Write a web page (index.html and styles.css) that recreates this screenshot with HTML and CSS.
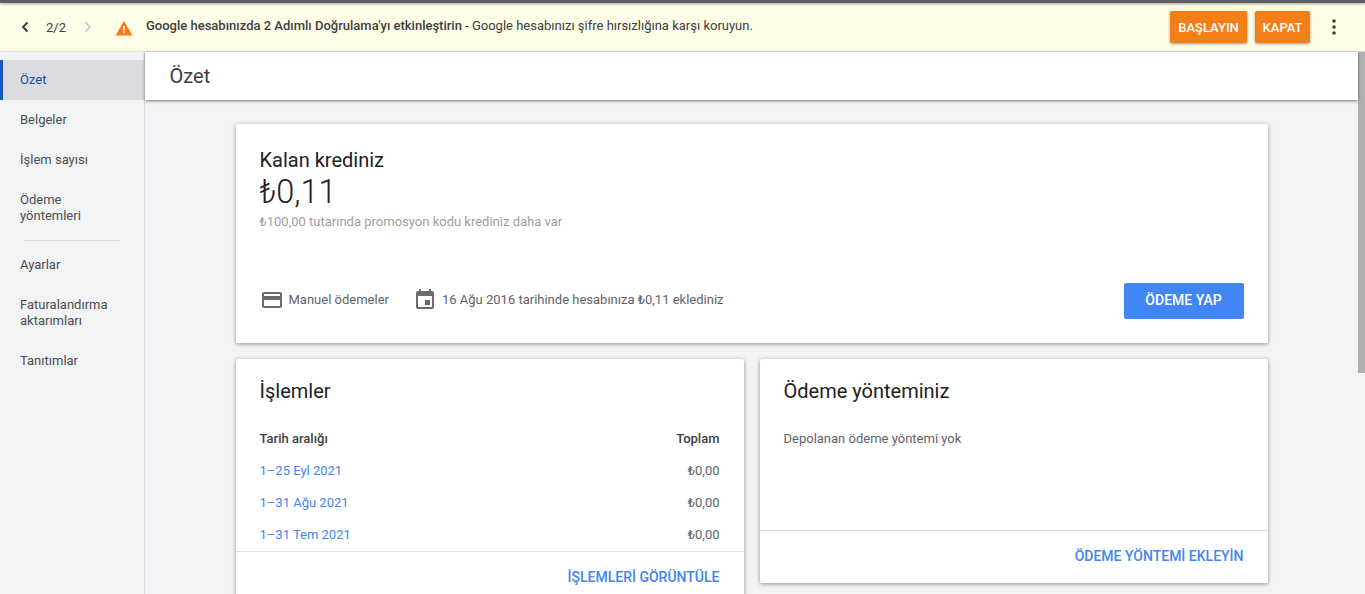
FILE: index.html
```html
<!DOCTYPE html>
<html lang="tr">
<head>
<meta charset="utf-8">
<title>Özet</title>
<link rel="stylesheet" href="styles.css">
</head>
<body>
<div class="topstrip"></div>
<div class="banner">
  <div class="pager">
    <svg class="chev" width="24" height="24" viewBox="0 0 24 24"><path d="M14.500 7.500L10 12l4.500 4.500" fill="none" stroke="#3c4043" stroke-width="2"/></svg>
    <span class="count">2/2</span>
    <svg class="chev" width="24" height="24" viewBox="0 0 24 24"><path d="M9.500 7.500L14 12l-4.500 4.500" fill="none" stroke="#c4c4c4" stroke-width="1.600"/></svg>
  </div>
  <svg class="warn" width="18" height="16" viewBox="0 0 18 16"><path d="M9 1L17.500 15.500H.5z" fill="#f57c17"/><rect x="8.200" y="6" width="1.600" height="4.500" fill="#fff"/><rect x="8.200" y="11.500" width="1.600" height="1.600" fill="#fff"/></svg>
  <p class="message"><b>Google hesabınızda 2 Adımlı Doğrulama'yı etkinleştirin</b> - Google hesabınızı şifre hırsızlığına karşı koruyun.</p>
  <button class="orange start">BAŞLAYIN</button>
  <button class="orange close">KAPAT</button>
  <svg class="more" width="4" height="16" viewBox="0 0 4 16"><circle cx="2" cy="2" r="1.800"/><circle cx="2" cy="8" r="1.800"/><circle cx="2" cy="14" r="1.800"/></svg>
</div>
<div class="app">
  <nav class="side">
    <a class="nav active">Özet</a>
    <a class="nav">Belgeler</a>
    <a class="nav">İşlem sayısı</a>
    <a class="nav two">Ödeme<br>yöntemleri</a>
    <div class="rule"></div>
    <a class="nav">Ayarlar</a>
    <a class="nav two">Faturalandırma<br>aktarımları</a>
    <a class="nav">Tanıtımlar</a>
  </nav>
  <main class="main">
    <header class="head"><h1>Özet</h1></header>
    <div class="content">
      <section class="card credit">
        <h2>Kalan krediniz</h2>
        <div class="amount"><span class="lira">₺</span>0,11</div>
        <div class="promo"><span class="lira">₺</span>100,00 tutarında promosyon kodu krediniz daha var</div>
        <div class="credit-foot">
          <svg class="ic" width="24" height="24" viewBox="0 0 24 24"><path fill="#6b6b6b" d="M20 4H4c-1.100 0-2 .9-2 2v12c0 1.100.9 2 2 2h16c1.100 0 2-.9 2-2V6c0-1.100-.9-2-2-2zm0 14H4v-6h16v6zm0-10H4V6h16v2z"/></svg>
          <span class="meta">Manuel ödemeler</span>
          <svg class="ic cal" width="24" height="24" viewBox="0 0 24 24"><path fill="#6b6b6b" d="M17 12h-5v5h5v-5zM16 1v2H8V1H6v2H5c-1.100 0-2 .9-2 2v14c0 1.100.9 2 2 2h14c1.100 0 2-.9 2-2V5c0-1.100-.9-2-2-2h-1V1h-2zm3 18H5V8h14v11z"/></svg>
          <span class="meta">16 Ağu 2016 tarihinde hesabınıza <span class="lira">₺</span>0,11 eklediniz</span>
          <button class="pay">ÖDEME YAP</button>
        </div>
      </section>
      <div class="cols">
        <section class="card tx">
          <h2 class="title">İşlemler</h2>
          <div class="row th"><span>Tarih aralığı</span><span>Toplam</span></div>
          <div class="row"><a>1–25 Eyl 2021</a><span><span class="lira">₺</span>0,00</span></div>
          <div class="row"><a>1–31 Ağu 2021</a><span><span class="lira">₺</span>0,00</span></div>
          <div class="row"><a>1–31 Tem 2021</a><span><span class="lira">₺</span>0,00</span></div>
          <div class="action tx-action"><a>İŞLEMLERİ GÖRÜNTÜLE</a></div>
        </section>
        <section class="card method">
          <h2 class="title">Ödeme yönteminiz</h2>
          <p class="none">Depolanan ödeme yöntemi yok</p>
          <div class="action"><a>ÖDEME YÖNTEMİ EKLEYİN</a></div>
        </section>
      </div>
    </div>
  </main>
  <div class="scrollbar"><div class="thumb"></div></div>
</div>
</body>
</html>
```
FILE: styles.css
```css
* { box-sizing: border-box; }
html, body { margin: 0; height: 594px; overflow: hidden; }
body { font-family: Roboto, "Liberation Sans", sans-serif; font-size: 13px; color: #3c4043; background: #f1f3f4; }
h1, h2, p { margin: 0; font-weight: 400; }
a { color: #4285f4; }
button { border: 0; font-family: inherit; cursor: pointer; }
.lira { font-family: "Liberation Sans", Roboto, sans-serif; line-height: 0; }

.topstrip { height: 3px; background: #5f6065; box-shadow: 0 1px 3px rgba(0,0,0,.35); position: relative; }
.banner { height: 49px; display: flex; align-items: center; background: #fffde7; border-bottom: 1px solid #e0e0e0; padding-left: 13px; }
.pager { display: flex; align-items: center; width: 103px; }
.count { width: 36px; margin-left: 9px; margin-right: -6px; font-size: 13px; color: #3c4043; }
.chev { flex: none; }
.warn { flex: none; margin: 1px 0 0 -1px; }
.message { flex: 1; margin-left: 13px; font-size: 13px; color: #3c4043; margin-top: -4px; }
.message b { font-weight: 500; }
.orange { height: 32px; background: #f57f17; color: #fff; font-size: 13px; font-weight: 500; border-radius: 2px; box-shadow: 0 1px 3px rgba(0,0,0,.4); padding: 0; }
.start { width: 77px; }
.close { width: 55px; margin-left: 8px; }
.more { fill: #3c4043; margin: 0 29px 0 22px; }

.app { display: flex; height: 542px; position: relative; }
.side { width: 145px; flex: none; background: #f1f3f4; border-right: 1px solid #dadce0; padding-top: 8px; }
.nav { display: flex; align-items: center; height: 40px; padding-left: 20px; color: #4a4d51; font-size: 13px; line-height: 16px; }
.nav.two { height: 56px; }
.nav.active { background: #dadce0; color: #174ea6; border-left: 3px solid #1a56c4; padding-left: 17px; }
.rule { height: 1px; background: #dadce0; margin: 4px 24px 4px; }

.main { flex: 1; min-width: 0; }
.head { height: 48px; background: #fff; box-shadow: 0 1px 3px rgba(0,0,0,.5); display: flex; align-items: center; padding-left: 24.500px; position: relative; }
.head h1 { font-size: 20px; color: #3c4043; }
.content { padding: 24px 90.500px 0 90.500px; }
.card { background: #fff; border-radius: 2px; box-shadow: 0 1px 4px rgba(0,0,0,.4); }

.credit { height: 219px; padding: 24px 24px 0; }
.credit h2 { font-size: 20px; line-height: 24px; color: #212121; }
.amount { font-size: 32.500px; line-height: 38px; color: #212121; font-weight: 300; margin-top: 1px; }
.promo { font-size: 13px; line-height: 16px; color: #9e9e9e; margin-top: 3px; }
.credit-foot { display: flex; align-items: center; margin-top: 53px; height: 36px; }
.ic { flex: none; margin-bottom: 2px; }
.meta { margin-left: 5px; margin-bottom: 4px; font-size: 13px; color: #5f6368; }
.cal { margin-left: 24px; }
.pay { margin-left: auto; width: 120px; height: 36px; background: #4285f4; color: #fff; font-size: 14px; font-weight: 500; border-radius: 2px; padding: 0 0 2px; }

.cols { display: flex; gap: 16px; margin-top: 16px; align-items: flex-start; }
.cols .card { width: 508px; }
.title { font-size: 20px; line-height: 24px; color: #212121; padding: 20px 24px 0; }
.tx { height: 260px; }
.method { height: 224px; }
.row { display: flex; justify-content: space-between; height: 32px; align-items: center; padding: 0 24px; font-size: 13px; color: #5f6368; }
.row.th { margin-top: 19px; color: #3c4043; font-weight: 500; }
.action { display: flex; justify-content: flex-end; align-items: center; height: 53px; border-top: 1px solid #e0e0e0; padding: 0 24px 2px; font-size: 14px; font-weight: 500; }
.tx-action { height: 52px; margin-top: 1px; }
.none { height: 127px; padding: 28px 24px 0; font-size: 13px; color: #5f6368; }

.scrollbar { width: 7px; flex: none; background: #f1f3f4; }
.thumb { height: 321px; background: #b0b0b2; }
```
